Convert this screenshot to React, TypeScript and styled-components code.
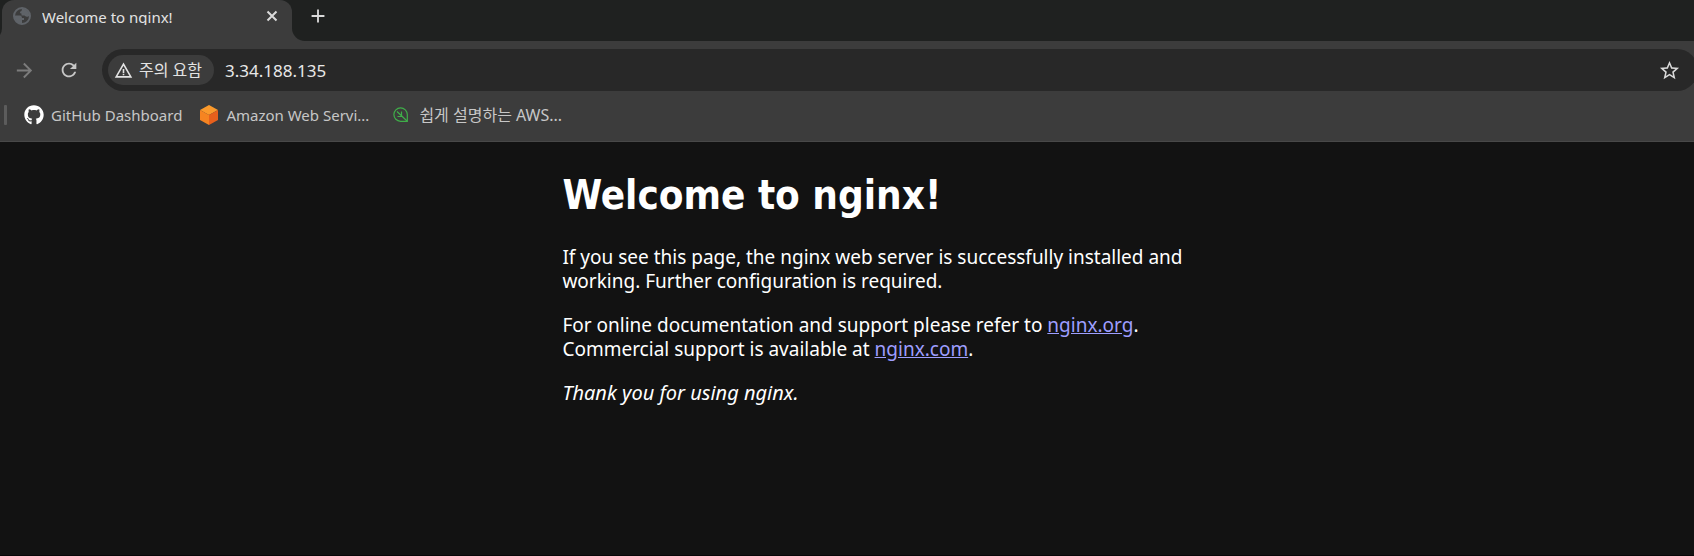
import React from "react";
import styled, { createGlobalStyle } from "styled-components";
import { MdAdd, MdArrowForward, MdRefresh, MdStarBorder, MdWarningAmber } from "react-icons/md";
import { FaGithub } from "react-icons/fa";

const GlobalStyle = createGlobalStyle`
  * { box-sizing: border-box; }
  body {
    margin: 0;
    background: #121212;
    font-family: "Noto Sans", "Noto Sans CJK KR", sans-serif;
  }
`;

const Window = styled.div`
  display: flex;
  flex-direction: column;
  min-height: 100vh;
  overflow: hidden;
  border-bottom: 1px solid #080608;
`;

const TabStrip = styled.header`
  display: flex;
  align-items: flex-start;
  height: 41px;
  padding-left: 2px;
  background: #1f2120;
`;

const Tab = styled.div`
  position: relative;
  display: flex;
  align-items: center;
  width: 290px;
  height: 41px;
  padding: 0 12px 9px 10px;
  background: #3c3c3c;
  border-radius: 12px 12px 0 0;
  color: #e3e3e3;
`;

const TabFlare = styled.svg<{ $side: "left" | "right" }>`
  position: absolute;
  bottom: 0;
  ${(p) => (p.$side === "left" ? "right: 100%; transform: scaleX(-1);" : "left: 100%;")}
  fill: #3c3c3c;
`;

const TabTitle = styled.span`
  flex: 1;
  height: 18px;
  margin-left: 10px;
  overflow: hidden;
  font-size: 15px;
  line-height: 20px;
  white-space: nowrap;
`;

const IconButton = styled.button<{ $color?: string }>`
  display: flex;
  align-items: center;
  justify-content: center;
  flex: none;
  padding: 0;
  border: 0;
  background: none;
  color: ${(p) => p.$color ?? "#dadada"};
`;

const NewTabButton = styled(IconButton)`
  width: 32px;
  height: 32px;
  margin-left: 10px;
`;

const Toolbar = styled.nav`
  display: flex;
  align-items: center;
  gap: 22px;
  padding: 8px 0 8px 13px;
  background: #3c3c3c;
`;

const AddressBar = styled.div`
  display: flex;
  flex: 1;
  align-items: center;
  height: 42px;
  margin: 0 -4px 0 0;
  padding: 0 17px 0 6px;
  border-radius: 21px;
  background: #282828;
`;

const SecurityChip = styled.button`
  display: flex;
  align-items: center;
  gap: 6px;
  height: 30px;
  padding: 0 12px 0 6px;
  border: 0;
  border-radius: 15px;
  background: #3c3c3c;
  color: #e3e3e3;
  font: inherit;
  font-size: 16px;
  line-height: 20px;
`;

const AddressInput = styled.input`
  flex: 1;
  min-width: 0;
  margin-left: 11px;
  padding: 0;
  border: 0;
  outline: 0;
  background: none;
  color: #e8e8e8;
  font: inherit;
  font-size: 17px;
`;

const Bookmarks = styled.nav`
  display: flex;
  align-items: center;
  gap: 17px;
  height: 43px;
  padding: 0 0 10px 4px;
  border-bottom: 1px solid #484848;
  background: #3c3c3c;
`;

const Divider = styled.span`
  width: 3px;
  height: 20px;
  border-radius: 1px;
  background: #5c5c5c;
`;

const Bookmark = styled.a<{ $large?: boolean }>`
  display: flex;
  align-items: center;
  gap: 7px;
  color: #c7c7c7;
  font-size: ${(p) => (p.$large ? 16 : 15)}px;
  line-height: 20px;
  text-decoration: none;
  white-space: nowrap;
`;

const Page = styled.main`
  padding: 29px 0 29px 33.2%;
  color: #fff;
  font-family: "Noto Sans", sans-serif;
  font-size: 19px;
  line-height: 24px;
`;

const Article = styled.article`
  max-width: 665px;
`;

const Heading = styled.h1`
  margin: 0 0 26px;
  font-family: "DejaVu Sans Condensed", "DejaVu Sans", sans-serif;
  font-size: 40px;
  line-height: 48px;
`;

const Paragraph = styled.p`
  margin: 0 0 20px;
`;

const Thanks = styled.em`
  font-size: 20px;
`;

const Link = styled.a`
  color: #9e9eff;
`;

const Flare = ({ side }: { side: "left" | "right" }) => (
  <TabFlare $side={side} width="13" height="13" viewBox="0 0 13 13" aria-hidden="true">
    <path d="M0 0A13 13 0 0 0 13 13H0Z" />
  </TabFlare>
);

const GlobeIcon = () => (
  <svg width="20" height="20" viewBox="0 0 20 20" aria-hidden="true">
    <circle cx="10" cy="10" r="8" fill="none" stroke="#5f6368" strokeWidth="2" />
    <path d="M10 2.500C13 2.500 17 5 17.500 9.500C16 11.500 14 11 12.500 9.500H9.500V7.500C7.500 7.500 7.500 5.500 9.500 5Z" fill="#5f6368" />
    <path d="M2.500 9.500H8C9.500 9.500 10 11 10 12H12V14H10V17.500C5 17.500 2.500 14 2.500 9.500Z" fill="#5f6368" />
  </svg>
);

const CloseIcon = () => (
  <svg width="16" height="16" viewBox="0 0 16 16" stroke="currentColor" strokeWidth="2" aria-hidden="true">
    <path d="M3.500 3.500 12.500 12.500M12.500 3.500 3.500 12.500" />
  </svg>
);

const CubeIcon = () => (
  <svg width="20" height="20" viewBox="0 0 20 20" aria-hidden="true">
    <path d="M10 0 19 5 10 10 1 5Z" fill="#fb9a2c" />
    <path d="M1 5 10 10V20L1 15Z" fill="#f68421" />
    <path d="M19 5 10 10V20L19 15Z" fill="#e8601c" />
  </svg>
);

const LeafIcon = () => (
  <svg width="26" height="16" viewBox="-7 0 26 16" fill="none" stroke="#3fae49" strokeWidth="1.200" aria-hidden="true">
    <path d="M14.300 14.300H7.500A6.700 6.700 0 1 1 14.300 7.500Z" />
    <path d="M4 4.500 14 14M8.500 4.500V8.500M4.500 9.500H9" />
  </svg>
);

export default function App() {
  return (
    <Window>
      <GlobalStyle />
      <TabStrip>
        <Tab>
          <Flare side="left" />
          <GlobeIcon />
          <TabTitle>Welcome to nginx!</TabTitle>
          <IconButton aria-label="Close tab"><CloseIcon /></IconButton>
          <Flare side="right" />
        </Tab>
        <NewTabButton aria-label="New tab"><MdAdd size={22} /></NewTabButton>
      </TabStrip>
      <Toolbar>
        <IconButton aria-label="Forward" $color="#7c7c7c"><MdArrowForward size={23} /></IconButton>
        <IconButton aria-label="Reload" $color="#c7c7c7"><MdRefresh size={22} /></IconButton>
        <AddressBar>
          <SecurityChip><MdWarningAmber size={19} />주의 요함</SecurityChip>
          <AddressInput aria-label="Address" defaultValue="3.34.188.135" />
          <IconButton aria-label="Bookmark this page"><MdStarBorder size={23} /></IconButton>
        </AddressBar>
      </Toolbar>
      <Bookmarks>
        <Divider />
        <Bookmark href="#github"><FaGithub size={20} color="#fff" />GitHub Dashboard</Bookmark>
        <Bookmark href="#amazon"><CubeIcon />Amazon Web Servi...</Bookmark>
        <Bookmark href="#aws" $large><LeafIcon />쉽게 설명하는 AWS...</Bookmark>
      </Bookmarks>
      <Page>
        <Article>
          <Heading>Welcome to nginx!</Heading>
          <Paragraph>
            If you see this page, the nginx web server is successfully installed and working. Further configuration is
            required.
          </Paragraph>
          <Paragraph>
            For online documentation and support please refer to <Link href="http://nginx.org/">nginx.org</Link>.<br />
            Commercial support is available at <Link href="http://nginx.com/">nginx.com</Link>.
          </Paragraph>
          <Paragraph><Thanks>Thank you for using nginx.</Thanks></Paragraph>
        </Article>
      </Page>
    </Window>
  );
}
